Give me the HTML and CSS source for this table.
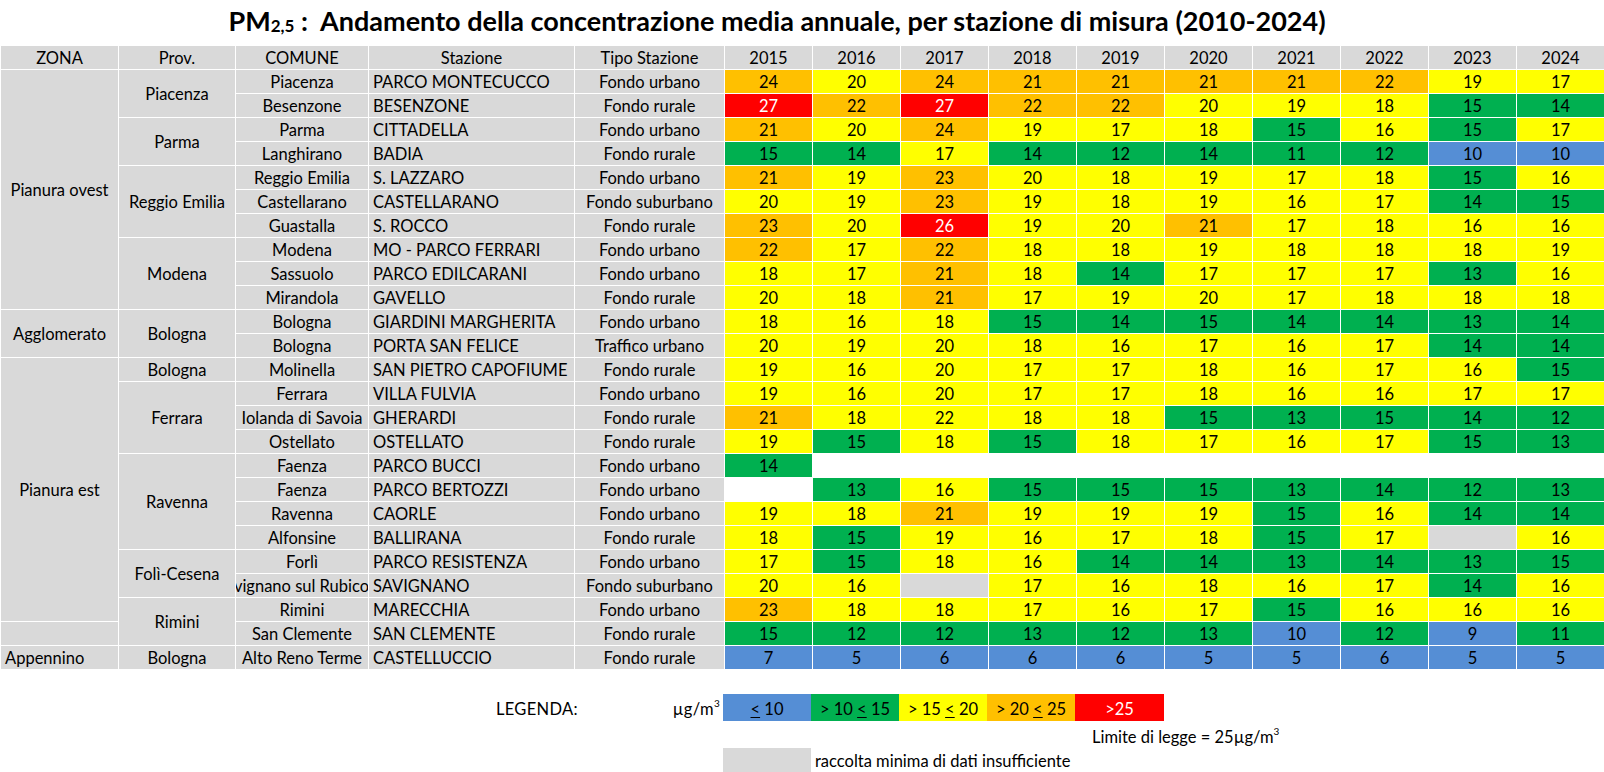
FILE: index.html
```html
<!DOCTYPE html>
<html lang="it">
<head>
<meta charset="utf-8">
<title>PM2,5 - Andamento della concentrazione media annuale</title>
<link rel="stylesheet" href="styles.css">
</head>
<body>
<h1 class="title">PM<span class="sub">2,5</span> :&nbsp; Andamento della concentrazione media annuale, per stazione di misura (2010-2024)</h1>
<table class="pm">
<colgroup>
<col class="w-zona"><col class="w-prov"><col class="w-comune"><col class="w-staz"><col class="w-tipo">
<col class="w-yr"><col class="w-yr"><col class="w-yr"><col class="w-yr"><col class="w-yr">
<col class="w-yr"><col class="w-yr"><col class="w-yr"><col class="w-yr"><col class="w-yr">
</colgroup>
<thead>
<tr><th>ZONA</th><th>Prov.</th><th>COMUNE</th><th>Stazione</th><th>Tipo Stazione</th><th>2015</th><th>2016</th><th>2017</th><th>2018</th><th>2019</th><th>2020</th><th>2021</th><th>2022</th><th>2023</th><th>2024</th></tr>
</thead>
<tbody>
<tr><td rowspan="10">Pianura ovest</td><td rowspan="2">Piacenza</td><td>Piacenza</td><td class="st">PARCO MONTECUCCO</td><td>Fondo urbano</td><td class="o">24</td><td class="y">20</td><td class="o">24</td><td class="o">21</td><td class="o">21</td><td class="o">21</td><td class="o">21</td><td class="o">22</td><td class="y">19</td><td class="y">17</td></tr>
<tr><td>Besenzone</td><td class="st">BESENZONE</td><td>Fondo rurale</td><td class="r">27</td><td class="o">22</td><td class="r">27</td><td class="o">22</td><td class="o">22</td><td class="y">20</td><td class="y">19</td><td class="y">18</td><td class="g">15</td><td class="g">14</td></tr>
<tr><td rowspan="2">Parma</td><td>Parma</td><td class="st">CITTADELLA</td><td>Fondo urbano</td><td class="o">21</td><td class="y">20</td><td class="o">24</td><td class="y">19</td><td class="y">17</td><td class="y">18</td><td class="g">15</td><td class="y">16</td><td class="g">15</td><td class="y">17</td></tr>
<tr><td>Langhirano</td><td class="st">BADIA</td><td>Fondo rurale</td><td class="g">15</td><td class="g">14</td><td class="y">17</td><td class="g">14</td><td class="g">12</td><td class="g">14</td><td class="g">11</td><td class="g">12</td><td class="b">10</td><td class="b">10</td></tr>
<tr><td rowspan="3">Reggio Emilia</td><td>Reggio Emilia</td><td class="st">S. LAZZARO</td><td>Fondo urbano</td><td class="o">21</td><td class="y">19</td><td class="o">23</td><td class="y">20</td><td class="y">18</td><td class="y">19</td><td class="y">17</td><td class="y">18</td><td class="g">15</td><td class="y">16</td></tr>
<tr><td>Castellarano</td><td class="st">CASTELLARANO</td><td>Fondo suburbano</td><td class="y">20</td><td class="y">19</td><td class="o">23</td><td class="y">19</td><td class="y">18</td><td class="y">19</td><td class="y">16</td><td class="y">17</td><td class="g">14</td><td class="g">15</td></tr>
<tr><td>Guastalla</td><td class="st">S. ROCCO</td><td>Fondo rurale</td><td class="o">23</td><td class="y">20</td><td class="r">26</td><td class="y">19</td><td class="y">20</td><td class="o">21</td><td class="y">17</td><td class="y">18</td><td class="y">16</td><td class="y">16</td></tr>
<tr><td rowspan="3">Modena</td><td>Modena</td><td class="st">MO - PARCO FERRARI</td><td>Fondo urbano</td><td class="o">22</td><td class="y">17</td><td class="o">22</td><td class="y">18</td><td class="y">18</td><td class="y">19</td><td class="y">18</td><td class="y">18</td><td class="y">18</td><td class="y">19</td></tr>
<tr><td>Sassuolo</td><td class="st">PARCO EDILCARANI</td><td>Fondo urbano</td><td class="y">18</td><td class="y">17</td><td class="o">21</td><td class="y">18</td><td class="g">14</td><td class="y">17</td><td class="y">17</td><td class="y">17</td><td class="g">13</td><td class="y">16</td></tr>
<tr><td>Mirandola</td><td class="st">GAVELLO</td><td>Fondo rurale</td><td class="y">20</td><td class="y">18</td><td class="o">21</td><td class="y">17</td><td class="y">19</td><td class="y">20</td><td class="y">17</td><td class="y">18</td><td class="y">18</td><td class="y">18</td></tr>
<tr><td rowspan="2">Agglomerato</td><td rowspan="2">Bologna</td><td>Bologna</td><td class="st">GIARDINI MARGHERITA</td><td>Fondo urbano</td><td class="y">18</td><td class="y">16</td><td class="y">18</td><td class="g">15</td><td class="g">14</td><td class="g">15</td><td class="g">14</td><td class="g">14</td><td class="g">13</td><td class="g">14</td></tr>
<tr><td>Bologna</td><td class="st">PORTA SAN FELICE</td><td>Traffico urbano</td><td class="y">20</td><td class="y">19</td><td class="y">20</td><td class="y">18</td><td class="y">16</td><td class="y">17</td><td class="y">16</td><td class="y">17</td><td class="g">14</td><td class="g">14</td></tr>
<tr><td rowspan="11">Pianura est</td><td>Bologna</td><td>Molinella</td><td class="st">SAN PIETRO CAPOFIUME</td><td>Fondo rurale</td><td class="y">19</td><td class="y">16</td><td class="y">20</td><td class="y">17</td><td class="y">17</td><td class="y">18</td><td class="y">16</td><td class="y">17</td><td class="y">16</td><td class="g">15</td></tr>
<tr><td rowspan="3">Ferrara</td><td>Ferrara</td><td class="st">VILLA FULVIA</td><td>Fondo urbano</td><td class="y">19</td><td class="y">16</td><td class="y">20</td><td class="y">17</td><td class="y">17</td><td class="y">18</td><td class="y">16</td><td class="y">16</td><td class="y">17</td><td class="y">17</td></tr>
<tr><td>Iolanda di Savoia</td><td class="st">GHERARDI</td><td>Fondo rurale</td><td class="o">21</td><td class="y">18</td><td class="y">22</td><td class="y">18</td><td class="y">18</td><td class="g">15</td><td class="g">13</td><td class="g">15</td><td class="g">14</td><td class="g">12</td></tr>
<tr><td>Ostellato</td><td class="st">OSTELLATO</td><td>Fondo rurale</td><td class="y">19</td><td class="g">15</td><td class="y">18</td><td class="g">15</td><td class="y">18</td><td class="y">17</td><td class="y">16</td><td class="y">17</td><td class="g">15</td><td class="g">13</td></tr>
<tr><td rowspan="4">Ravenna</td><td>Faenza</td><td class="st">PARCO BUCCI</td><td>Fondo urbano</td><td class="g">14</td><td class="w" colspan="9"></td></tr>
<tr><td>Faenza</td><td class="st">PARCO BERTOZZI</td><td>Fondo urbano</td><td class="w"></td><td class="g">13</td><td class="y">16</td><td class="g">15</td><td class="g">15</td><td class="g">15</td><td class="g">13</td><td class="g">14</td><td class="g">12</td><td class="g">13</td></tr>
<tr><td>Ravenna</td><td class="st">CAORLE</td><td>Fondo urbano</td><td class="y">19</td><td class="y">18</td><td class="o">21</td><td class="y">19</td><td class="y">19</td><td class="y">19</td><td class="g">15</td><td class="y">16</td><td class="g">14</td><td class="g">14</td></tr>
<tr><td>Alfonsine</td><td class="st">BALLIRANA</td><td>Fondo rurale</td><td class="y">18</td><td class="g">15</td><td class="y">19</td><td class="y">16</td><td class="y">17</td><td class="y">18</td><td class="g">15</td><td class="y">17</td><td class="n"></td><td class="y">16</td></tr>
<tr><td rowspan="2">Folì-Cesena</td><td>Forlì</td><td class="st">PARCO RESISTENZA</td><td>Fondo urbano</td><td class="y">17</td><td class="g">15</td><td class="y">18</td><td class="y">16</td><td class="g">14</td><td class="g">14</td><td class="g">13</td><td class="g">14</td><td class="g">13</td><td class="g">15</td></tr>
<tr><td><div class="clip"><span>Savignano sul Rubicone</span></div></td><td class="st">SAVIGNANO</td><td>Fondo suburbano</td><td class="y">20</td><td class="y">16</td><td class="n"></td><td class="y">17</td><td class="y">16</td><td class="y">18</td><td class="y">16</td><td class="y">17</td><td class="g">14</td><td class="y">16</td></tr>
<tr><td rowspan="2">Rimini</td><td>Rimini</td><td class="st">MARECCHIA</td><td>Fondo urbano</td><td class="o">23</td><td class="y">18</td><td class="y">18</td><td class="y">17</td><td class="y">16</td><td class="y">17</td><td class="g">15</td><td class="y">16</td><td class="y">16</td><td class="y">16</td></tr>
<tr><td></td><td>San Clemente</td><td class="st">SAN CLEMENTE</td><td>Fondo rurale</td><td class="g">15</td><td class="g">12</td><td class="g">12</td><td class="g">13</td><td class="g">12</td><td class="g">13</td><td class="b">10</td><td class="g">12</td><td class="b">9</td><td class="g">11</td></tr>
<tr><td class="st">Appennino</td><td>Bologna</td><td>Alto Reno Terme</td><td class="st">CASTELLUCCIO</td><td>Fondo rurale</td><td class="b">7</td><td class="b">5</td><td class="b">6</td><td class="b">6</td><td class="b">6</td><td class="b">5</td><td class="b">5</td><td class="b">6</td><td class="b">5</td><td class="b">5</td></tr>
</tbody>
</table>

<div class="legend">
  <div class="lg-label"><span>LEGENDA:</span><span>µg/m<sup>3</sup></span></div>
  <div class="lg-box b"><span><u>&lt;</u> 10</span></div>
  <div class="lg-box g"><span>&gt; 10 <u>&lt;</u> 15</span></div>
  <div class="lg-box y"><span>&gt; 15 <u>&lt;</u> 20</span></div>
  <div class="lg-box o"><span>&gt; 20 <u>&lt;</u> 25</span></div>
  <div class="lg-box r"><span>&gt;25</span></div>
  <div class="lg-limit">Limite di legge = 25µg/m<sup>3</sup></div>
  <div class="lg-box n lg-gray"></div>
  <div class="lg-note">raccolta minima di dati insufficiente</div>
</div>
</body>
</html>
```
FILE: styles.css
```css
html, body {
  margin: 0;
  padding: 0;
  background: #ffffff;
}
body {
  font-family: Lato, "Liberation Sans", sans-serif;
  color: #000000;
  width: 1604px;
}
.title {
  margin: 0;
  height: 45px;
  box-sizing: border-box;
  padding: 3px 50px 0 0;
  text-align: center;
  font-size: 27px;
  line-height: 36px;
  font-weight: bold;
  white-space: nowrap;
}
.title .sub {
  font-size: 17px;
  position: relative;
  top: 1px;
}

.pm {
  border-collapse: collapse;
  table-layout: fixed;
  width: 1604px;
  font-size: 16.5px;
}
.w-zona { width: 118px; }
.w-prov { width: 117px; }
.w-comune { width: 133px; }
.w-staz { width: 206px; }
.w-tipo { width: 150px; }
.w-yr { width: 88px; }

.pm tr { height: 24px; }
.pm th, .pm td {
  padding: 1px 0 0 0;
  border: 1px solid #ffffff;
  background: #d9d9d9;
  text-align: center;
  vertical-align: middle;
  font-weight: normal;
  line-height: 20px;
  white-space: nowrap;
  overflow: hidden;
}
.pm .st {
  text-align: left;
  padding-left: 4px;
}
.clip {
  display: flex;
  justify-content: center;
  overflow: hidden;
  white-space: nowrap;
}
.clip span { flex: none; }

.y { background: #ffff00 !important; }
.o { background: #ffc000 !important; }
.r { background: #ff0000 !important; color: #ffffff; }
.g { background: #00b050 !important; }
.b { background: #558ed5 !important; }
.n { background: #d9d9d9 !important; }
.w { background: #ffffff !important; }

.legend {
  margin-top: 24px;
  display: grid;
  grid-template-columns: 723px 88px 88px 88px 88px 89px 1fr;
  grid-template-rows: 27px 27px 25px;
  font-size: 16.5px;
}
.lg-label {
  grid-column: 1;
  grid-row: 1;
  display: flex;
  justify-content: space-between;
  align-items: center;
  padding: 3px 3px 0 496px;
  letter-spacing: 0.3px;
}
.lg-label sup, .lg-limit sup {
  font-size: 10px;
  vertical-align: 8px;
  line-height: 0;
}
.lg-box {
  display: flex;
  align-items: center;
  justify-content: center;
  padding-top: 3px;
  box-sizing: border-box;
}
.lg-box u { text-decoration-thickness: 1px; text-underline-offset: 2px; }
.lg-limit {
  grid-column: 6 / 8;
  grid-row: 2;
  padding: 6px 0 0 17px;
  white-space: nowrap;
}
.lg-gray {
  grid-column: 2;
  grid-row: 3;
}
.lg-note {
  grid-column: 3 / 8;
  grid-row: 3;
  padding: 3px 0 0 4px;
  white-space: nowrap;
}
```
